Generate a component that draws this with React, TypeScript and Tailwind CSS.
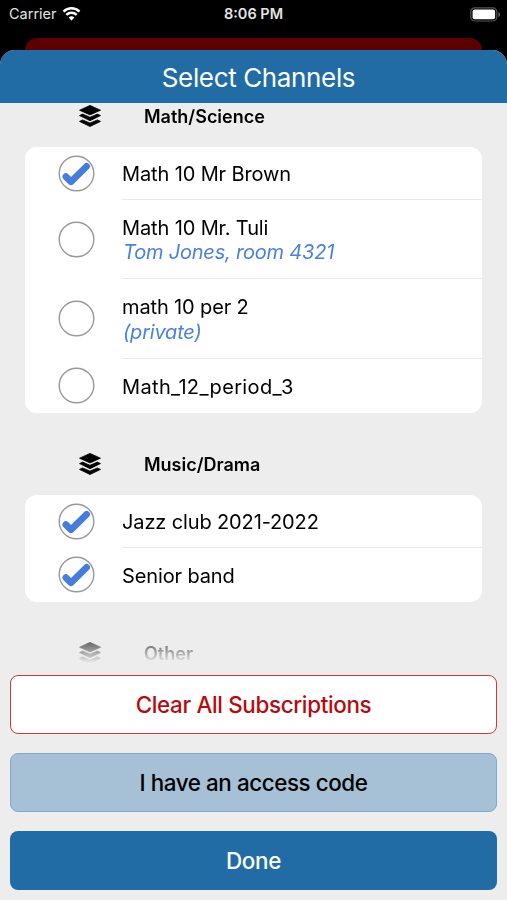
import clsx from "clsx";

type Channel = {
  name: string;
  note?: string;
  checked?: boolean;
  wide?: boolean;
};

const mathChannels: Channel[] = [
  { name: "Math 10 Mr Brown", checked: true },
  { name: "Math 10 Mr. Tuli", note: "Tom Jones, room 4321" },
  { name: "math 10 per 2", note: "(private)" },
  { name: "Math_12_period_3", wide: true },
];

const musicChannels: Channel[] = [
  { name: "Jazz club 2021-2022", checked: true },
  { name: "Senior band", checked: true },
];

export default function App() {
  return (
    <div className="flex h-[900px] w-[507px] flex-col overflow-hidden bg-black font-['Inter','Liberation_Sans',sans-serif] text-black">
      <StatusBar />
      <div className="mx-[25px] mt-[10px] h-3 shrink-0 rounded-t-[12px] bg-[#5c0000]" />
      <div className="flex min-h-0 flex-1 flex-col overflow-hidden rounded-t-[15px] bg-[#ededed]">
        <header className="flex h-[53px] shrink-0 items-center justify-center bg-[#226ca6] pl-[10px] pt-0.5 text-[26px] tracking-[-0.36px] text-white">
          <span>Select Channels</span>
        </header>
        <main className="h-[562px] shrink-0 overflow-hidden px-[25px] [mask-image:linear-gradient(to_bottom,black_524px,transparent_560px)]">
          <SectionHeading title="Math/Science" className="h-[43.5px] pb-[17px]" />
          <ChannelCard channels={mathChannels} />
          <SectionHeading title="Music/Drama" className="h-[82px] pt-[21px]" />
          <ChannelCard channels={musicChannels} />
          <SectionHeading title="Other" className="h-[82px] pt-[21px]" />
        </main>
        <footer className="flex flex-col gap-[19px] px-[10px] pt-[10px] text-[22.4px] font-[450]">
          <button className="h-[59px] rounded-[8px] border-[1.5px] border-[#c93a3e] bg-white tracking-[-0.34px] text-[#b9090d]">
            Clear All Subscriptions
          </button>
          <button className="h-[59px] rounded-[8px] border border-[#7fa9c8] bg-[#a6c0d5] tracking-[-0.42px]">
            I have an access code
          </button>
          <button className="h-[59px] rounded-[8px] bg-[#226ca6] tracking-[-0.34px] text-white">
            Done
          </button>
        </footer>
      </div>
    </div>
  );
}

function StatusBar() {
  return (
    <div className="grid h-7 shrink-0 grid-cols-3 items-center pl-[9px] pr-[6px] text-[14.5px] text-[#e4e4e4]">
      <div className="flex items-center gap-[5px]">
        <span>Carrier</span>
        <WifiIcon />
      </div>
      <span className="pr-[3px] text-center font-semibold">8:06 PM</span>
      <div className="flex justify-end">
        <BatteryIcon />
      </div>
    </div>
  );
}

function SectionHeading({ title, className }: { title: string; className: string }) {
  return (
    <div className={clsx("flex items-center pl-[54px] text-[18px] font-semibold", className)}>
      <LayersIcon />
      <h2 className="ml-[43px]">{title}</h2>
    </div>
  );
}

function ChannelCard({ channels }: { channels: Channel[] }) {
  const last = channels.length - 1;

  return (
    <div className="rounded-[12px] bg-white">
      {channels.map((channel, i) => (
        <div key={channel.name} className="flex items-center pl-[33px]">
          <CheckCircle checked={channel.checked} />
          <div
            className={clsx(
              "ml-[27px] flex flex-1 flex-col justify-center pt-[3px] text-[20px] leading-[24.5px]",
              channel.note ? "h-[79.5px]" : i === last ? "h-[54px]" : "h-[53px]",
              channel.wide ? "tracking-[0.35px]" : "tracking-[-0.13px]",
              i < last && "border-b border-[#e9e9e9]",
            )}
          >
            <span>{channel.name}</span>
            {channel.note && (
              <span className="pl-px italic tracking-[-0.2px] text-[#4a80df]">{channel.note}</span>
            )}
          </div>
        </div>
      ))}
    </div>
  );
}

function CheckCircle({ checked }: { checked?: boolean }) {
  return (
    <svg width="37" height="37" viewBox="0 0 37 37" fill="none">
      <circle cx="18.5" cy="18.5" r="17.3" stroke="#999" strokeWidth="1.4" />
      {checked && (
        <path
          d="M7.900 21.700 13.100 26.700 28.600 11.300"
          stroke="#467ddd"
          strokeWidth="6.8"
          strokeLinecap="round"
          strokeLinejoin="round"
        />
      )}
    </svg>
  );
}

function LayersIcon() {
  return (
    <svg
      width="22"
      height="22"
      viewBox="0 0 22 22"
      fill="currentColor"
      stroke="currentColor"
      strokeWidth="0.8"
      strokeLinejoin="round"
    >
      <path d="M11 .4 21.500 5.200 11 9.900.5 5.200Z" />
      <path d="M.5 10.600 3.600 9.100 11 12.300 18.400 9.100 21.500 10.600 11 15.700Z" />
      <path d="M.5 16.400 3.600 14.900 11 18.100 18.400 14.900 21.500 16.400 11 21.500Z" />
    </svg>
  );
}

function WifiIcon() {
  return (
    <svg width="19" height="14" viewBox="0 0 18 14" fill="none" stroke="white" strokeWidth="2.4">
      <path d="M1 4.600a11.400 11.400 0 0 1 16 0" />
      <path d="M3.800 7.900a7.400 7.400 0 0 1 10.400 0" />
      <path d="M9 13.600 6.100 10.600a4.200 4.200 0 0 1 5.800 0Z" fill="white" stroke="none" />
    </svg>
  );
}

function BatteryIcon() {
  return (
    <svg width="31" height="15" viewBox="0 0 31 15" fill="none">
      <rect x="0.8" y="0.8" width="26" height="13.2" rx="4" stroke="#555" strokeWidth="1.2" />
      <rect x="2.6" y="2.6" width="22.5" height="9.6" rx="2" fill="white" />
      <path d="M28.400 5v5c1-.4 1.700-1.400 1.700-2.500S29.400 5.400 28.400 5Z" fill="#666" />
    </svg>
  );
}
